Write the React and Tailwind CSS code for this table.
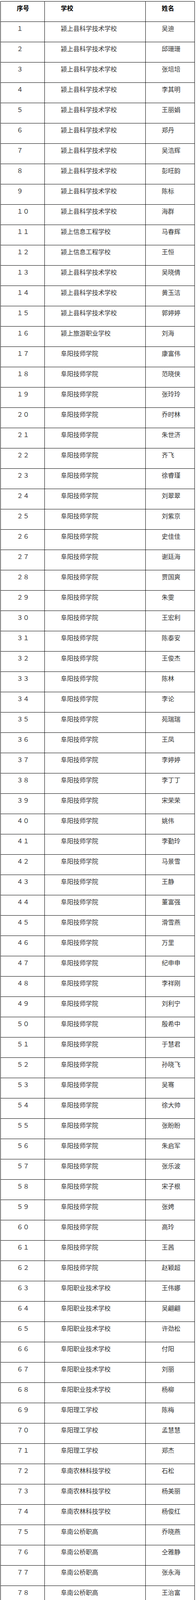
const rows = [
  ["颍上县科学技术学校", "吴迪"],
  ["颍上县科学技术学校", "邱珊珊"],
  ["颍上县科学技术学校", "张培培"],
  ["颍上县科学技术学校", "李其明"],
  ["颍上县科学技术学校", "王丽娟"],
  ["颍上县科学技术学校", "郑丹"],
  ["颍上县科学技术学校", "吴浩辉"],
  ["颍上县科学技术学校", "彭旺韵"],
  ["颍上县科学技术学校", "陈标"],
  ["颍上县科学技术学校", "海群"],
  ["颍上信息工程学校", "马春辉"],
  ["颍上信息工程学校", "王恒"],
  ["颍上县科学技术学校", "吴晓倩"],
  ["颍上县科学技术学校", "黄玉洁"],
  ["颍上县科学技术学校", "郭婷婷"],
  ["颍上旅游职业学校", "刘海"],
  ["阜阳技师学院", "康富伟"],
  ["阜阳技师学院", "范晓侠"],
  ["阜阳技师学院", "张玲玲"],
  ["阜阳技师学院", "乔时林"],
  ["阜阳技师学院", "朱世济"],
  ["阜阳技师学院", "齐飞"],
  ["阜阳技师学院", "徐睿瑾"],
  ["阜阳技师学院", "刘翠翠"],
  ["阜阳技师学院", "刘紫京"],
  ["阜阳技师学院", "史佳佳"],
  ["阜阳技师学院", "谢廷海"],
  ["阜阳技师学院", "贾国爽"],
  ["阜阳技师学院", "朱雯"],
  ["阜阳技师学院", "王宏利"],
  ["阜阳技师学院", "陈泰安"],
  ["阜阳技师学院", "王俊杰"],
  ["阜阳技师学院", "陈林"],
  ["阜阳技师学院", "李论"],
  ["阜阳技师学院", "苑瑞瑞"],
  ["阜阳技师学院", "王凤"],
  ["阜阳技师学院", "李婷婷"],
  ["阜阳技师学院", "李丁丁"],
  ["阜阳技师学院", "宋荣荣"],
  ["阜阳技师学院", "姚伟"],
  ["阜阳技师学院", "李勤玲"],
  ["阜阳技师学院", "马景雪"],
  ["阜阳技师学院", "王静"],
  ["阜阳技师学院", "董富强"],
  ["阜阳技师学院", "滑雪燕"],
  ["阜阳技师学院", "万里"],
  ["阜阳技师学院", "纪申申"],
  ["阜阳技师学院", "李祥刚"],
  ["阜阳技师学院", "刘利宁"],
  ["阜阳技师学院", "殷希中"],
  ["阜阳技师学院", "于慧君"],
  ["阜阳技师学院", "孙晓飞"],
  ["阜阳技师学院", "吴骞"],
  ["阜阳技师学院", "徐大帅"],
  ["阜阳技师学院", "张盼盼"],
  ["阜阳技师学院", "朱启军"],
  ["阜阳技师学院", "张乐波"],
  ["阜阳技师学院", "宋子根"],
  ["阜阳技师学院", "张娉"],
  ["阜阳技师学院", "高玲"],
  ["阜阳技师学院", "王茜"],
  ["阜阳技师学院", "赵颖超"],
  ["阜阳职业技术学校", "王伟娜"],
  ["阜阳职业技术学校", "吴翩翩"],
  ["阜阳职业技术学校", "许劲松"],
  ["阜阳职业技术学校", "付阳"],
  ["阜阳职业技术学校", "刘丽"],
  ["阜阳职业技术学校", "杨柳"],
  ["阜阳理工学校", "陈梅"],
  ["阜阳理工学校", "孟慧慧"],
  ["阜阳理工学校", "郑杰"],
  ["阜南农林科技学校", "石松"],
  ["阜南农林科技学校", "杨美丽"],
  ["阜南农林科技学校", "杨俊红"],
  ["阜南公桥职高", "乔晓燕"],
  ["阜南公桥职高", "仝雅静"],
  ["阜南公桥职高", "张永海"],
  ["阜南公桥职高", "王治富"],
  ["阜阳科技工程学校", "朱红"],
  ["阜阳科技工程学校", "汤传帅"],
  ["阜阳科技工程学校", "郭清香"],
  ["阜阳科技工程学校", "王占陆"],
  ["皖北经济技术学校", "曹桂丽"],
  ["皖北经济技术学校", "刘力玮"],
  ["皖北经济技术学校", "刘鑫亚"],
  ["皖北经济技术学校", "韦晓庆"],
  ["皖北经济技术学校", "吴毅"],
  ["皖北经济技术学校", "袁旭"],
  ["皖北经济技术学校", "张贝贝"],
  ["皖北经济技术学校", "黄玉珍"],
  ["阜阳市医药科技工程学校", "高培培"],
  ["阜阳市医药科技工程学校", "顾婷婷"],
  ["阜阳市医药科技工程学校", "梁宇"],
  ["皖北电子信息工程学校", "李坤"],
  ["皖北电子信息工程学校", "刘德玉"],
  ["皖北电子信息工程学校", "刘文强"],
  ["皖北电子信息工程学校", "刘侠"],
  ["皖北电子信息工程学校", "刘章"],
  ["皖北电子信息工程学校", "王唱唱"],
  ["皖北电子信息工程学校", "王中原"],
  ["皖北电子信息工程学校", "张浩"],
  ["皖北电子信息工程学校", "张锐"],
  ["阜阳农业学校", "苏振"],
  ["阜阳经贸旅游学校", "何田沛"],
  ["阜阳经贸旅游学校", "田静斐"],
  ["阜阳工商贸易学校", "徐志"],
];

// numbers in the source are full-width digits
function fullWidth(n) {
  return String(n)
    .split("")
    .map((d) => String.fromCharCode(0xff10 + Number(d)))
    .join("");
}

function Row({ cells, head = false }) {
  return (
    <div
      className={`grid h-[52px] grid-cols-[113px_259px_126px] ${
        head ? "font-bold text-black" : ""
      }`}
    >
      {cells.map((c, i) => (
        <div
          key={i}
          className="h-[52px] overflow-hidden whitespace-nowrap border-r border-b border-black pl-[41px] pt-[4px] leading-[24px]"
        >
          {c}
        </div>
      ))}
    </div>
  );
}

export default function App() {
  return (
    <div
      className="bg-white pt-[3px] pl-[1px] pb-[6px] text-[16px] text-[#333]"
      style={{ fontFamily: '"Noto Sans CJK SC", sans-serif' }}
    >
      <div className="w-[499px] border-t border-l border-black">
        <Row head cells={["序号", "学校", "姓名"]} />
        {rows.map(([school, name], i) => (
          <Row key={i} cells={[fullWidth(i + 1), school, name]} />
        ))}
      </div>
    </div>
  );
}
